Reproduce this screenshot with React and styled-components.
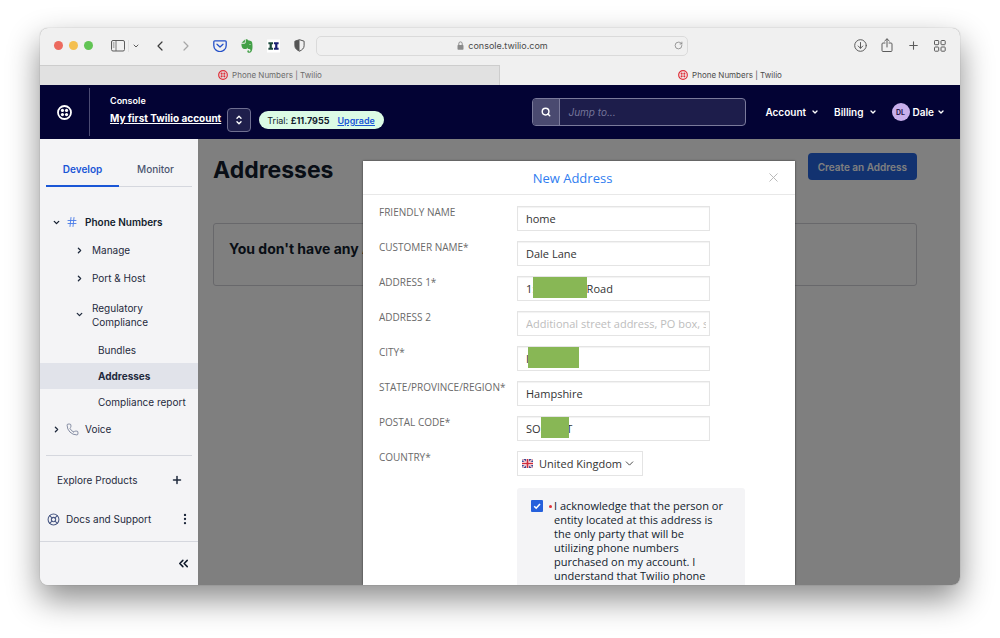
import React from "react";
import styled, { createGlobalStyle, css } from "styled-components";
import {
  ChevronDown,
  ChevronLeft,
  ChevronRight,
  ChevronsLeft,
  EllipsisVertical,
  Hash,
  LifeBuoy,
  Phone,
  Plus,
  RotateCw,
  Search,
  X,
} from "lucide-react";

const ui = `Inter, "Liberation Sans", sans-serif`;
const form = `"Open Sans", "Noto Sans", sans-serif`;

const GlobalStyle = createGlobalStyle`
  *, *::before, *::after { box-sizing: border-box; }
  body { margin: 0; background: #fff; font-family: ${ui}; color: #121c2d; }
  button, input, select { font: inherit; color: inherit; margin: 0; }
  button { border: 0; padding: 0; background: none; display: inline-flex; align-items: center; justify-content: center; }
  a { color: inherit; text-decoration: none; }
  svg { display: block; flex: none; }
  h1, h2, p { margin: 0; }
`;

const Desktop = styled.div`
  display: flex;
  height: 100vh;
  padding: 28px 40px 53px;
`;

const BrowserWindow = styled.div`
  flex: 1;
  min-width: 0;
  display: flex;
  flex-direction: column;
  overflow: hidden;
  border-radius: 8px;
  background: #f0f0f0;
  box-shadow: 0 0 1px rgba(0, 0, 0, 0.4), 0 14px 32px rgba(0, 0, 0, 0.46);
`;

/* Browser toolbar */

const Toolbar = styled.div`
  display: flex;
  align-items: center;
  height: 37px;
  padding: 0 14px 2px 14px;
  color: #5c5c5c;
`;

const Lights = styled.div`
  display: flex;
  gap: 6px;
  margin-right: 18px;
`;

const Light = styled.span`
  width: 9px;
  height: 9px;
  border-radius: 50%;
  background: ${(p) => p.$color};
`;

const ToolGroup = styled.div`
  display: flex;
  align-items: center;
  gap: ${(p) => p.$gap}px;
  margin-right: ${(p) => p.$after || 0}px;
`;

const ToolButton = styled.button`
  color: ${(p) => p.$color || "#5c5c5c"};
`;

const ToolRule = styled.span`
  width: 1px;
  height: 12px;
  background: #e0e0e0;
`;

const UrlBar = styled.div`
  flex: 1;
  display: flex;
  align-items: center;
  height: 20px;
  margin-right: 166px;
  padding: 0 4px 0 14px;
  border: 1px solid #dadada;
  border-radius: 5px;
  color: #7d7d7d;
`;

const Url = styled.span`
  flex: 1;
  display: flex;
  align-items: center;
  justify-content: center;
  gap: 4px;
  font-size: 9px;
  color: #4a4a4a;
`;

const TabStrip = styled.div`
  display: grid;
  grid-template-columns: 1fr 1fr;
  height: 20px;
`;

const BrowserTab = styled.button`
  gap: 4px;
  font-size: 8px;
  color: ${(p) => (p.$active ? "#4c4c4c" : "#6c6c6c")};
  background: ${(p) => (p.$active ? "#f0f0f0" : "#e1e1e1")};
  ${(p) => !p.$active && css`
    box-shadow: inset -1px 1px #cdcdcd;
  `}
`;

/* Console header */

const Header = styled.header`
  display: flex;
  align-items: center;
  height: 54px;
  padding-right: 15px;
  background: #030334;
  color: #fff;
`;

const Brand = styled.a`
  display: flex;
  align-items: center;
  justify-content: center;
  width: 50px;
  height: 48px;
  border-right: 1px solid #4b4b73;
`;

const AccountBlock = styled.div`
  display: flex;
  flex-direction: column;
  gap: 5px;
  margin: 0 6px 6px 20px;
  line-height: 12px;
  white-space: nowrap;
`;

const Eyebrow = styled.span`
  font-size: 9px;
  font-weight: 600;
`;

const AccountLink = styled.a`
  font-size: 10px;
  font-weight: 700;
  text-decoration: underline;
`;

const Switcher = styled.button`
  width: 24px;
  height: 24px;
  margin: 16px 8px 0 0;
  border: 1px solid #6e6e90;
  border-radius: 4px;
  background: #1f1f4c;
  color: #fff;
`;

const TrialPill = styled.div`
  display: flex;
  align-items: center;
  gap: 8px;
  height: 18px;
  margin-top: 16px;
  padding: 0 9px 0 8px;
  border-radius: 9px;
  background: #dbfbe5;
  color: #121c2d;
  font-size: 9px;
  white-space: nowrap;

  a {
    color: #1a56d6;
    font-weight: 600;
    text-decoration: underline;
  }
`;

const JumpTo = styled.label`
  display: flex;
  width: 214px;
  height: 28px;
  margin-left: auto;
  margin-right: 19px;
  border: 1px solid #7a7a9b;
  border-radius: 4px;
  background: #1d1d4b;
  overflow: hidden;
`;

const JumpIcon = styled.span`
  display: flex;
  align-items: center;
  justify-content: center;
  width: 27px;
  border-right: 1px solid #7a7a9b;
  background: #4a4a70;
`;

const JumpInput = styled.input`
  flex: 1;
  min-width: 0;
  padding: 0 8px;
  border: 0;
  outline: 0;
  background: none;
  font-size: 10px;

  &::placeholder {
    color: #75759a;
    font-style: italic;
    opacity: 1;
  }
`;

const UserNav = styled.nav`
  display: flex;
  gap: 15px;
`;

const NavButton = styled.button`
  gap: ${(p) => p.$gap}px;
  font-size: 10px;
  font-weight: 600;
`;

const Avatar = styled.span`
  display: flex;
  align-items: center;
  justify-content: center;
  width: 18px;
  height: 18px;
  border-radius: 50%;
  background: #c8afec;
  color: #2a1b4d;
  font-size: 7px;
  font-weight: 700;
`;

/* Sidebar */

const Body = styled.div`
  flex: 1;
  min-height: 0;
  display: flex;
`;

const Sidebar = styled.aside`
  display: flex;
  flex-direction: column;
  width: 158px;
  background: #f4f4f6;
  font-size: 10px;
`;

const SideTabs = styled.div`
  display: grid;
  grid-template-columns: 1fr 1fr;
  height: 35px;
  margin: 13px 6px 21px;
`;

const SideTab = styled.button`
  font-weight: ${(p) => (p.$active ? 600 : 500)};
  color: ${(p) => (p.$active ? "#1a56d6" : "#4b5671")};
  border-bottom: ${(p) => (p.$active ? "2px solid #1a56d6" : "1px solid #d5d7de")};
`;

const NavRow = styled.a`
  display: flex;
  align-items: center;
  gap: ${(p) => (p.$level === 2 ? 8 : 4)}px;
  min-height: 28px;
  padding-left: ${(p) => (p.$level === 2 ? 35 : 12)}px;
  line-height: 14px;
  font-weight: ${(p) => (p.$strong ? 600 : 400)};
  color: ${(p) => (p.$strong ? "#121c2d" : "#1f2a3d")};
`;

const RowIcon = styled.span`
  display: flex;
  width: 14px;
  margin-right: 2px;
  justify-content: center;
  color: ${(p) => p.$color};
`;

const WrapRow = styled(NavRow)`
  min-height: 45px;
`;

const SubLink = styled.a`
  display: flex;
  align-items: center;
  min-height: 26px;
  padding-left: 58px;
  white-space: nowrap;
  background: ${(p) => (p.$active ? "#e1e3ea" : "none")};
  font-weight: ${(p) => (p.$active ? 700 : 400)};
  color: #1f2a3d;
`;

const SideRule = styled.hr`
  width: calc(100% - 12px);
  height: 1px;
  margin: 12px 6px 0;
  border: 0;
  background: #d5d7de;
`;

const SideAction = styled.button`
  justify-content: flex-start;
  gap: 6px;
  height: ${(p) => p.$height}px;
  padding: ${(p) => p.$pad};
  color: #1f2a3d;

  > svg:last-child { margin-left: auto; }
`;

const SideFooter = styled.div`
  flex: 1;
  display: flex;
  align-items: center;
  justify-content: flex-end;
  margin-top: 7px;
  padding-right: 7px;
  border-top: 1px solid #d5d7de;
`;

/* Page behind the dialog */

const Main = styled.main`
  position: relative;
  flex: 1;
  min-width: 0;
  padding: 14px 43px 0 15px;
  background: #fff;
`;

const PageHead = styled.div`
  display: flex;
  align-items: flex-start;
  justify-content: space-between;
  margin-bottom: 36px;
`;

const PageTitle = styled.h1`
  font-size: 23px;
  line-height: 34px;
  font-weight: 700;
`;

const PrimaryButton = styled.button`
  height: 27px;
  padding: 0 10px;
  border-radius: 4px;
  background: #2464e0;
  color: #fff;
  font-size: 10px;
  font-weight: 600;
`;

const EmptyCard = styled.section`
  height: 63px;
  padding: 16px 15px;
  border: 1px solid #d0d0d6;
  border-radius: 3px;
`;

const EmptyTitle = styled.h2`
  font-size: 14px;
  line-height: 18px;
  font-weight: 700;
`;

/* Dialog */

const Backdrop = styled.div`
  position: absolute;
  inset: 0;
  display: flex;
  justify-content: center;
  padding-top: 22px;
  background: rgba(0, 0, 0, 0.5);
  overflow: hidden;
`;

const Dialog = styled.section`
  width: 432px;
  min-height: 100%;
  background: #fff;
  box-shadow: 0 0 2px rgba(0, 0, 0, 0.6);
  font-family: ${form};
  font-size: 11px;
  color: #333;
`;

const DialogHead = styled.div`
  display: flex;
  align-items: center;
  height: 34px;
  padding: 0 14px 0 16px;
  border-bottom: 1px solid #e8e8e8;
`;

const DialogTitle = styled.h2`
  flex: 1;
  text-align: center;
  font-size: 13px;
  font-weight: 400;
  color: #2f7df0;
`;

const DialogBody = styled.form`
  display: flex;
  flex-direction: column;
  gap: 10px;
  padding: 11px 14px 0 16px;
`;

const Field = styled.div`
  display: grid;
  grid-template-columns: 138px 1fr;
  align-items: start;
`;

const Label = styled.label`
  font-size: 10px;
  line-height: 12px;
  text-transform: uppercase;
  color: #6a6a6a;
`;

const Control = styled.div`
  position: relative;
  width: ${(p) => p.$width}px;
`;

const box = css`
  display: block;
  width: 100%;
  height: 25px;
  border: 1px solid #e4e4e4;
  border-radius: 0;
  background: #fff;
  outline: 0;
`;

const TextInput = styled.input`
  ${box}
  padding: 0 3px 0 8px;
  box-shadow: inset 0 1px 1px #f2f2f2;

  &::placeholder { color: #bdbdbd; opacity: 1; }
`;

const Redaction = styled.span`
  position: absolute;
  top: 1px;
  left: ${(p) => p.$left}px;
  width: ${(p) => p.$width}px;
  height: 21px;
  background: #88b755;
`;

const Select = styled.select`
  ${box}
  appearance: none;
  padding: 0 18px 0 21px;
`;

const SelectArt = styled.span`
  position: absolute;
  inset: 0 7px 0 5px;
  display: flex;
  align-items: center;
  justify-content: space-between;
  pointer-events: none;
`;

const Consent = styled.label`
  display: flex;
  align-items: flex-start;
  width: 228px;
  margin: 2px 0 0 138px;
  padding: 11px 12px 12px 14px;
  border-radius: 3px;
  background: #f4f4f6;
  color: #121c2d;
  line-height: 14px;
`;

const ConsentText = styled.span`
  font-weight: 500;
  white-space: pre-line;
`;

const Tick = styled.input`
  appearance: none;
  flex: none;
  width: 12px;
  height: 12px;
  margin: 1px 6px 0 0;
  border-radius: 1px;
  background: #2560dc
    url("data:image/svg+xml,%3Csvg xmlns='http://www.w3.org/2000/svg' viewBox='0 0 12 12'%3E%3Cpath d='M3.2 6.2l2 2 3.8-4.2' fill='none' stroke='white' stroke-width='1.6'/%3E%3C/svg%3E");
`;

const Required = styled.span`
  flex: none;
  width: 3px;
  height: 3px;
  margin: 6px 2px 0 0;
  border-radius: 50%;
  background: #e0303a;
`;

/* Drawings */

const TwilioMark = ({ size, color }) => (
  <svg width={size} height={size} viewBox="0 0 30 30" fill={color}>
    <circle cx="15" cy="15" r="13" fill="none" stroke={color} strokeWidth="3.6" />
    <circle cx="10.9" cy="10.9" r="3.2" />
    <circle cx="19.1" cy="10.9" r="3.2" />
    <circle cx="10.9" cy="19.1" r="3.2" />
    <circle cx="19.1" cy="19.1" r="3.2" />
  </svg>
);

const SidebarIcon = () => (
  <svg width="14" height="12" viewBox="0 0 14 12" fill="none" stroke="currentColor">
    <rect x="0.5" y="0.5" width="13" height="10.5" rx="1.5" />
    <path d="M5 0.5v10.5M1.8 3h1.7M1.8 5h1.7M1.8 7h1.7" strokeWidth="0.8" />
  </svg>
);

const PocketIcon = () => (
  <svg width="14" height="12" viewBox="0 0 14 12" fill="none" stroke="#2450c8" strokeWidth="1.3" strokeLinecap="round" strokeLinejoin="round">
    <path d="M1.8 0.8h10.4c.6 0 1 .4 1 1v3.6a6.2 6.2 0 0 1-12.4 0V1.8c0-.6.4-1 1-1z" />
    <path d="M4 4.3l3 2.8 3-2.8" />
  </svg>
);

const EvernoteIcon = () => (
  <svg width="12" height="14" viewBox="0 0 12 14" fill="#43a047">
    <path d="M3.9.5L.6 3.8h2.6c.5 0 .7-.3.7-.7zM.4 4.7c0 2 .6 4.2 1.5 4.9 1 .6 3.2.7 3.8.2.3-.3.3-.9.4-1.4.4 1.1 1 1.5 2.1 1.600 1 .1 1.300.6 1.200 1.400 0 .8-.5 1.100-1.300 1-.5-.1-.6-.7-.1-1.100-1-.2-1.700.3-1.700 1.200 0 .9.8 1.300 2 1.300 2.300 0 3.200-2.700 3.200-6.300 0-2.700-.3-4.700-.9-5.100C9.700 1.800 8.300 1.700 7.400 1.600 7 .7 6 .2 4.700.3v3c0 .9-.5 1.400-1.400 1.400z" />
    <path d="M8.200 5.900c.2-.8 1.400-.8 1.700.2-.5-.2-1.100-.2-1.700-.2z" fill="#f0f0f0" />
  </svg>
);

const ColumnsIcon = () => (
  <svg width="13" height="14" viewBox="0 0 14 14">
    <rect width="14" height="14" fill="#fff" />
    <path d="M1.500 3h5v2h-1.300v4h1.300v2h-5V9h1.300V5H1.500z" fill="#1d4a3c" />
    <path d="M7.500 3h5v2h-1.300v4h1.300v2h-5V9h1.300V5H7.500z" fill="#1c2173" />
  </svg>
);

const ShieldIcon = () => (
  <svg width="11" height="13" viewBox="0 0 11 13">
    <path d="M5.500.7l4.600 1.500v4.600c0 2.500-2 4.200-4.600 5.400C2.900 11 .9 9.300.9 6.800V2.200z" fill="none" stroke="#555" />
    <path d="M5.500.7v11.500C2.900 11 .9 9.300.9 6.800V2.200z" fill="#555" />
  </svg>
);

const LockIcon = () => (
  <svg width="7" height="9" viewBox="0 0 7 9">
    <rect x="0.5" y="4" width="6" height="4.700" rx="0.8" fill="#8a8a8a" />
    <path d="M1.800 4V2.600a1.700 1.700 0 0 1 3.400 0V4" fill="none" stroke="#8a8a8a" />
  </svg>
);

const DownloadIcon = () => (
  <svg width="13" height="13" viewBox="0 0 13 13" fill="none" stroke="currentColor" strokeLinecap="round" strokeLinejoin="round">
    <circle cx="6.5" cy="6.5" r="5.8" />
    <path d="M6.500 3.500v5.700M4.200 7l2.300 2.300L8.800 7" />
  </svg>
);

const ShareIcon = () => (
  <svg width="12" height="15" viewBox="0 0 12 15" fill="none" stroke="currentColor" strokeLinecap="round" strokeLinejoin="round">
    <path d="M4 5H2a1 1 0 0 0-1 1v6.500a1 1 0 0 0 1 1h8a1 1 0 0 0 1-1V6a1 1 0 0 0-1-1H8M6 9V1M3.700 3L6 .8 8.300 3" />
  </svg>
);

const GridIcon = () => (
  <svg width="12" height="12" viewBox="0 0 12 12" fill="none" stroke="currentColor">
    <rect x="0.5" y="0.5" width="4.2" height="4.2" rx="0.7" />
    <rect x="7" y="0.5" width="4.2" height="4.2" rx="0.7" />
    <rect x="0.5" y="7" width="4.2" height="4.2" rx="0.7" />
    <rect x="7" y="7" width="4.2" height="4.2" rx="0.7" />
  </svg>
);

const UpDownIcon = () => (
  <svg width="8" height="10" viewBox="0 0 8 10" fill="none" stroke="currentColor" strokeWidth="1.4" strokeLinecap="round" strokeLinejoin="round">
    <path d="M2 3.200l2-1.900 2 1.900M2 6.800l2 1.900 2-1.900" />
  </svg>
);

const UkFlag = () => (
  <svg width="11" height="9" viewBox="0 0 11 9">
    <rect width="11" height="9" rx="1" fill="#3a4a94" />
    <path d="M0 0l11 9M11 0L0 9" stroke="#fff" strokeWidth="1.4" />
    <path d="M0 0l11 9M11 0L0 9" stroke="#cf2b3c" strokeWidth="0.5" />
    <path d="M5.500 0v9M0 4.500h11" stroke="#fff" strokeWidth="2.8" />
    <path d="M5.500 0v9M0 4.500h11" stroke="#cf2b3c" strokeWidth="1.7" />
  </svg>
);

const blank = (n) => "\u00a0".repeat(n);

const fields = [
  { id: "friendly", label: "Friendly Name", value: "home" },
  { id: "customer", label: "Customer Name*", value: "Dale Lane" },
  { id: "address1", label: "Address 1*", value: `1:${blank(18)}Road`, cover: [16, 54] },
  { id: "address2", label: "Address 2", value: "", placeholder: "Additional street address, PO box, s" },
  { id: "city", label: "City*", value: "I", cover: [11, 51] },
  { id: "region", label: "State/Province/Region*", value: "Hampshire" },
  { id: "postal", label: "Postal Code*", value: `SO:${blank(8)}T`, cover: [24, 28] },
];

const consent = `I acknowledge that the person or
entity located at this address is
the only party that will be
utilizing phone numbers
purchased on my account. I
understand that Twilio phone`;

export default function App() {
  return (
    <>
      <GlobalStyle />
      <Desktop>
        <BrowserWindow>
          <Toolbar>
            <Lights>
              <Light $color="#ec6a5e" />
              <Light $color="#f4bf4f" />
              <Light $color="#61c454" />
            </Lights>
            <ToolGroup $gap={3} $after={12}>
              <ToolButton aria-label="Sidebar"><SidebarIcon /></ToolButton>
              <ToolRule />
              <ToolButton aria-label="Tab groups"><ChevronDown size={8} strokeWidth={3} /></ToolButton>
            </ToolGroup>
            <ToolGroup $gap={10} $after={19}>
              <ToolButton aria-label="Back" $color="#3c3c3c"><ChevronLeft size={16} strokeWidth={1.8} /></ToolButton>
              <ToolButton aria-label="Forward" $color="#a6a6a6"><ChevronRight size={16} strokeWidth={1.8} /></ToolButton>
            </ToolGroup>
            <ToolGroup $gap={14} $after={11}>
              <ToolButton aria-label="Pocket"><PocketIcon /></ToolButton>
              <ToolButton aria-label="Evernote"><EvernoteIcon /></ToolButton>
              <ToolButton aria-label="Columns"><ColumnsIcon /></ToolButton>
              <ToolButton aria-label="Privacy report"><ShieldIcon /></ToolButton>
            </ToolGroup>
            <UrlBar>
              <Url><LockIcon />console.twilio.com</Url>
              <RotateCw size={9} strokeWidth={2} />
            </UrlBar>
            <ToolGroup $gap={14}>
              <ToolButton aria-label="Downloads"><DownloadIcon /></ToolButton>
              <ToolButton aria-label="Share"><ShareIcon /></ToolButton>
              <ToolButton aria-label="New tab"><Plus size={13} strokeWidth={2} /></ToolButton>
              <ToolButton aria-label="Tab overview"><GridIcon /></ToolButton>
            </ToolGroup>
          </Toolbar>
          <TabStrip>
            <BrowserTab><TwilioMark size={10} color="#e0303a" />Phone Numbers | Twilio</BrowserTab>
            <BrowserTab $active><TwilioMark size={10} color="#e0303a" />Phone Numbers | Twilio</BrowserTab>
          </TabStrip>

          <Header>
            <Brand href="#" aria-label="Twilio"><TwilioMark size={15} color="#fff" /></Brand>
            <AccountBlock>
              <Eyebrow>Console</Eyebrow>
              <AccountLink href="#">My first Twilio account</AccountLink>
            </AccountBlock>
            <Switcher aria-label="Switch account"><UpDownIcon /></Switcher>
            <TrialPill>
              <span>Trial: <b>£11.7955</b></span>
              <a href="#">Upgrade</a>
            </TrialPill>
            <JumpTo>
              <JumpIcon><Search size={10} strokeWidth={3.5} /></JumpIcon>
              <JumpInput aria-label="Jump to" placeholder="Jump to..." />
            </JumpTo>
            <UserNav>
              <NavButton $gap={5}>Account<ChevronDown size={8} strokeWidth={4} /></NavButton>
              <NavButton $gap={5}>Billing<ChevronDown size={8} strokeWidth={4} /></NavButton>
              <NavButton $gap={3}><Avatar>DL</Avatar>Dale<ChevronDown size={8} strokeWidth={4} /></NavButton>
            </UserNav>
          </Header>

          <Body>
            <Sidebar>
              <SideTabs>
                <SideTab $active>Develop</SideTab>
                <SideTab>Monitor</SideTab>
              </SideTabs>
              <NavRow href="#" $strong>
                <ChevronDown size={9} strokeWidth={3.5} />
                <RowIcon $color="#4a7ce8"><Hash size={12} strokeWidth={1.8} /></RowIcon>
                Phone Numbers
              </NavRow>
              <NavRow href="#" $level={2}><ChevronRight size={9} strokeWidth={3.5} />Manage</NavRow>
              <NavRow href="#" $level={2}><ChevronRight size={9} strokeWidth={3.5} />Port &amp; Host</NavRow>
              <WrapRow href="#" $level={2}>
                <ChevronDown size={9} strokeWidth={3.5} />
                <span>Regulatory<br />Compliance</span>
              </WrapRow>
              <SubLink href="#">Bundles</SubLink>
              <SubLink href="#" $active>Addresses</SubLink>
              <SubLink href="#">Compliance report</SubLink>
              <NavRow href="#">
                <ChevronRight size={9} strokeWidth={3.5} />
                <RowIcon $color="#6b7590"><Phone size={13} strokeWidth={1.5} /></RowIcon>
                Voice
              </NavRow>
              <SideRule />
              <SideAction $height={48} $pad="0 15px 0 17px">Explore Products<Plus size={12} strokeWidth={3} /></SideAction>
              <SideAction $height={30} $pad="0 6px 0 7px">
                <LifeBuoy size={13} strokeWidth={2} color="#4b5a85" />
                Docs and Support
                <EllipsisVertical size={14} strokeWidth={2} />
              </SideAction>
              <SideFooter>
                <button aria-label="Collapse sidebar"><ChevronsLeft size={15} strokeWidth={2.5} /></button>
              </SideFooter>
            </Sidebar>

            <Main>
              <PageHead>
                <PageTitle>Addresses</PageTitle>
                <PrimaryButton>Create an Address</PrimaryButton>
              </PageHead>
              <EmptyCard>
                <EmptyTitle>You don't have any A</EmptyTitle>
              </EmptyCard>

              <Backdrop>
                <Dialog role="dialog" aria-labelledby="dialog-title">
                  <DialogHead>
                    <DialogTitle id="dialog-title">New Address</DialogTitle>
                    <button aria-label="Close"><X size={15} strokeWidth={1.5} color="#b5b5b5" /></button>
                  </DialogHead>
                  <DialogBody>
                    {fields.map((f) => (
                      <Field key={f.id}>
                        <Label htmlFor={f.id}>{f.label}</Label>
                        <Control $width={193}>
                          <TextInput id={f.id} defaultValue={f.value} placeholder={f.placeholder} />
                          {f.cover && <Redaction $left={f.cover[0]} $width={f.cover[1]} />}
                        </Control>
                      </Field>
                    ))}
                    <Field>
                      <Label htmlFor="country">Country*</Label>
                      <Control $width={126}>
                        <Select id="country" defaultValue="gb">
                          <option value="gb">United Kingdom</option>
                        </Select>
                        <SelectArt><UkFlag /><ChevronDown size={13} strokeWidth={1.6} /></SelectArt>
                      </Control>
                    </Field>
                    <Consent>
                      <Tick type="checkbox" defaultChecked />
                      <Required />
                      <ConsentText>{consent}</ConsentText>
                    </Consent>
                  </DialogBody>
                </Dialog>
              </Backdrop>
            </Main>
          </Body>
        </BrowserWindow>
      </Desktop>
    </>
  );
}
